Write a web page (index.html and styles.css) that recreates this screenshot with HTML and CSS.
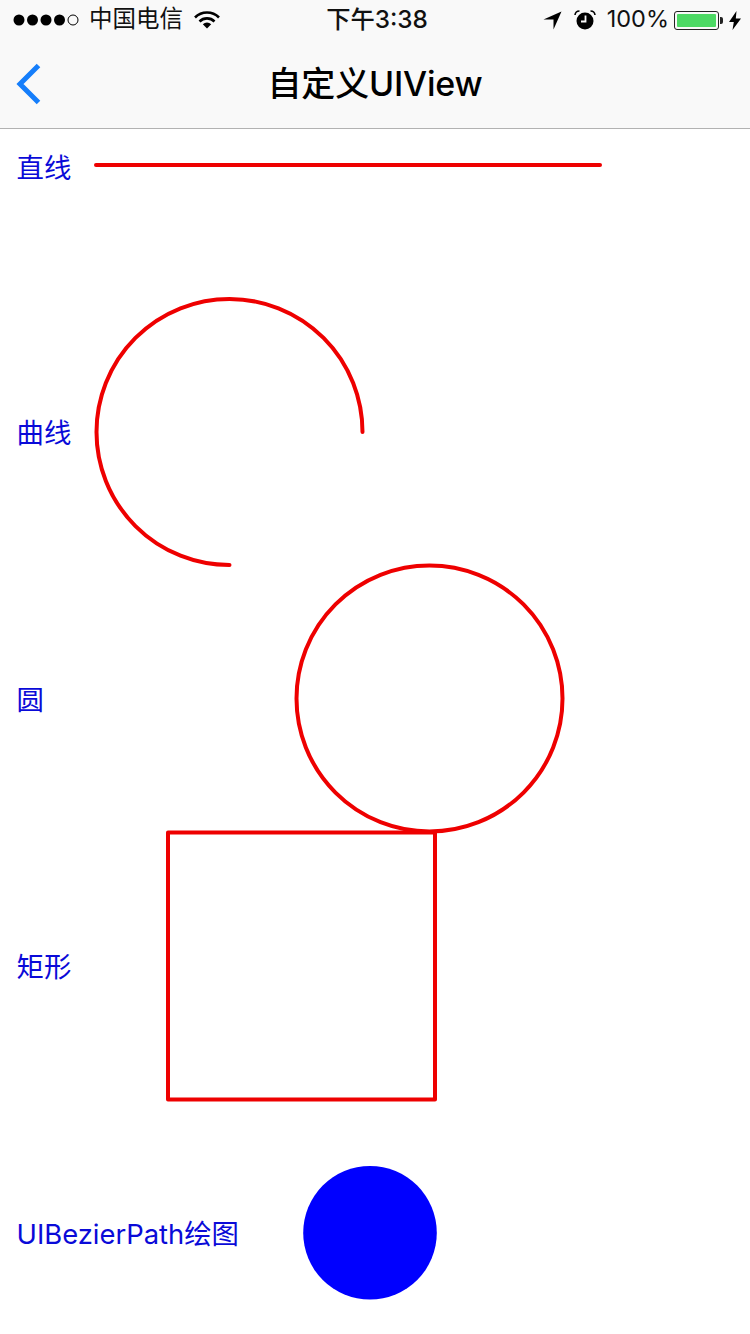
FILE: index.html
```html
<!DOCTYPE html>
<html lang="zh-CN">
<head>
  <meta charset="UTF-8">
  <meta name="viewport" content="width=device-width, initial-scale=1.0">
  <title>自定义UIView</title>
  <link rel="stylesheet" href="styles.css">
</head>
<body>
  <div class="page">
    <header class="topbar">
      <div class="status">
        <div class="status-left">
          <svg class="dots" width="68" height="12" viewBox="0 0 68 12">
            <circle cx="6" cy="6" r="5.5" fill="#000"/>
            <circle cx="19.5" cy="6" r="5.5" fill="#000"/>
            <circle cx="33" cy="6" r="5.5" fill="#000"/>
            <circle cx="46.5" cy="6" r="5.5" fill="#000"/>
            <circle cx="60" cy="6" r="5" fill="none" stroke="#000" stroke-width="1"/>
          </svg>
          <span class="carrier">中国电信</span>
          <svg class="wifi" width="26" height="18" viewBox="0 0 26 18">
            <path d="M1 6.5a17 17 0 0 1 24 0" fill="none" stroke="#000" stroke-width="2.6"/>
            <path d="M5.5 10.5a10.6 10.6 0 0 1 15 0" fill="none" stroke="#000" stroke-width="2.6"/>
            <path d="M8.8 13.2a6 6 0 0 1 8.4 0L13 17.6z" fill="#000"/>
          </svg>
        </div>
        <div class="time">下午3:38</div>
        <div class="status-right">
          <svg class="arrow" width="19" height="19" viewBox="0 0 19 19">
            <path d="M18.5 .5L10.500 18.5V8.500H.5z" fill="#000"/>
          </svg>
          <svg class="alarm" width="22" height="20" viewBox="0 0 22 20">
            <circle cx="11" cy="11" r="8.5" fill="#000"/>
            <path d="M11.5 5.5v6H7" fill="none" stroke="#f9f9f9" stroke-width="1.8"/>
            <path d="M1 5a4.5 4.5 0 0 1 4.5-4M21 5a4.5 4.5 0 0 0-4.5-4" fill="none" stroke="#000" stroke-width="1.6"/>
          </svg>
          <span class="percent">100%</span>
          <div class="battery"><div class="battery-fill"></div></div>
          <div class="battery-tip"></div>
          <svg class="bolt" width="12" height="19" viewBox="0 0 12 19">
            <path d="M7.500 0L0 11h4.800L3.500 19 12 7.500H6.800z" fill="#000"/>
          </svg>
        </div>
      </div>
      <nav class="navbar">
        <svg class="back" width="28" height="44" viewBox="0 0 28 44">
          <path d="M23.500 3.500L5 22l18.500 18.500" fill="none" stroke="#157efb" stroke-width="5"/>
        </svg>
        <h1 class="title">自定义UIView</h1>
      </nav>
    </header>

    <main>
      <section class="row row-line">
        <span class="label">直线</span>
        <svg class="sketch" width="750" height="76" viewBox="0 0 750 76">
          <line x1="96" y1="36" x2="600" y2="36"/>
        </svg>
      </section>
      <section class="row row-arc">
        <span class="label">曲线</span>
        <svg class="sketch" width="750" height="267" viewBox="0 0 750 267">
          <path d="M362.500 133A133 133 0 1 0 229.500 266"/>
        </svg>
      </section>
      <section class="row">
        <span class="label">圆</span>
        <svg class="sketch" width="750" height="267" viewBox="0 0 750 267">
          <circle cx="429.500" cy="132.500" r="133"/>
        </svg>
      </section>
      <section class="row">
        <span class="label">矩形</span>
        <svg class="sketch" width="750" height="267" viewBox="0 0 750 267">
          <rect x="168" y="-0.500" width="267" height="267"/>
        </svg>
      </section>
      <section class="row">
        <span class="label">UIBezierPath绘图</span>
        <svg class="sketch" width="750" height="267" viewBox="0 0 750 267">
          <circle class="solid" cx="370" cy="132.800" r="66.800"/>
        </svg>
      </section>
    </main>
  </div>
</body>
</html>
```

FILE: styles.css
```css
html, body {
  margin: 0;
  padding: 0;
  background-color: #ffffff;
}
body {
  font-family: Inter, "Noto Sans CJK SC", sans-serif;
  color: #000;
}
.page {
  width: 750px;
  height: 1334px;
  overflow: hidden;
}
.topbar {
  height: 128px;
  background-color: #f9f9f9;
  border-bottom: 1px solid #b2b2b2;
}
.status {
  height: 40px;
  display: grid;
  grid-template-columns: 1fr auto 1fr;
  align-items: center;
  color: #111;
}
.status-left {
  display: flex;
  align-items: center;
  padding-left: 13px;
}
.carrier {
  margin-left: 8px;
  font-size: 23.5px;
  line-height: 38px;
  margin-bottom: 2px;
}
.wifi {
  margin-left: 11px;
}
.time {
  font-size: 24.3px;
  font-weight: 500;
  line-height: 38px;
  margin-bottom: 2px;
  margin-left: 4px;
}
.status-right {
  display: flex;
  align-items: center;
  justify-content: flex-end;
  padding-right: 9px;
}
.alarm {
  margin-left: 12px;
}
.percent {
  margin-left: 11px;
  font-size: 23.5px;
  line-height: 38px;
  margin-bottom: 2px;
}
.battery {
  width: 45px;
  height: 19px;
  margin-left: 5px;
  padding: 2px;
  border: 1px solid #222;
  border-radius: 3px;
  box-sizing: border-box;
}
.battery-fill {
  height: 100%;
  background-color: #4cd964;
  border-radius: 1px;
}
.battery-tip {
  width: 3px;
  height: 7px;
  margin-left: 1px;
  background-color: #222;
  border-radius: 0 2px 2px 0;
}
.bolt {
  margin-left: 6px;
}
.navbar {
  height: 88px;
  display: flex;
  align-items: center;
  justify-content: center;
  position: relative;
}
.back {
  position: absolute;
  left: 15px;
  top: 22px;
}
.title {
  margin: 0 0 6px;
  font-size: 34px;
  font-weight: 500;
  letter-spacing: -0.2px;
}
.row {
  height: 267px;
  display: flex;
  align-items: center;
  position: relative;
}
.row-line {
  height: 76px;
}
.row-arc {
  margin-top: 94px;
}
.label {
  margin: 0 0 3px 16.5px;
  font-size: 27.4px;
  color: #0a0ad8;
  white-space: nowrap;
}
.sketch {
  position: absolute;
  left: 0;
  top: 0;
  overflow: visible;
}
.sketch line, .sketch path, .sketch circle, .sketch rect {
  fill: none;
  stroke: #ee0000;
  stroke-width: 4;
  stroke-linecap: round;
  stroke-linejoin: round;
}
.sketch .solid {
  fill: #0000ff;
  stroke: none;
}
```
